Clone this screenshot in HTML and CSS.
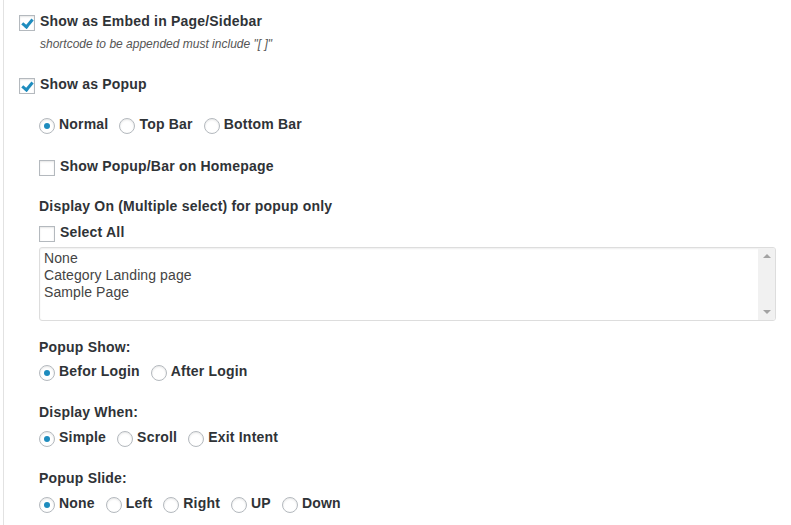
FILE: index.html
```html
<!DOCTYPE html>
<html lang="en">
<head>
  <meta charset="UTF-8">
  <meta name="viewport" content="width=device-width, initial-scale=1.0">
  <title>Popup settings</title>
  <link rel="stylesheet" href="styles.css">
</head>
<body>
  <div class="panel">
    <label class="row row-embed">
      <input class="cb" type="checkbox" checked>
      <span>Show as Embed in Page/Sidebar</span>
    </label>
    <p class="hint">shortcode to be appended must include "[ ]"</p>

    <label class="row row-popup">
      <input class="cb" type="checkbox" checked>
      <span>Show as Popup</span>
    </label>

    <div class="sub">
      <div class="row radios radios-type">
        <label class="opt"><input class="rd" type="radio" name="type" checked>Normal</label>
        <label class="opt"><input class="rd" type="radio" name="type">Top Bar</label>
        <label class="opt"><input class="rd" type="radio" name="type">Bottom Bar</label>
      </div>

      <label class="row row-home">
        <input class="cb" type="checkbox">
        <span>Show Popup/Bar on Homepage</span>
      </label>

      <div class="row heading heading-first">Display On (Multiple select) for popup only</div>
      <label class="row row-all">
        <input class="cb" type="checkbox">
        <span>Select All</span>
      </label>

      <div class="listbox">
        <ul class="items">
          <li>None</li>
          <li>Category Landing page</li>
          <li>Sample Page</li>
        </ul>
        <div class="scrollbar">
          <span class="arrow up"></span>
          <span class="arrow down"></span>
        </div>
      </div>

      <div class="row heading heading-show">Popup Show:</div>
      <div class="row radios">
        <label class="opt"><input class="rd" type="radio" name="show" checked>Befor Login</label>
        <label class="opt"><input class="rd" type="radio" name="show">After Login</label>
      </div>

      <div class="row heading">Display When:</div>
      <div class="row radios">
        <label class="opt"><input class="rd" type="radio" name="when" checked>Simple</label>
        <label class="opt"><input class="rd" type="radio" name="when">Scroll</label>
        <label class="opt"><input class="rd" type="radio" name="when">Exit Intent</label>
      </div>

      <div class="row heading">Popup Slide:</div>
      <div class="row radios">
        <label class="opt"><input class="rd" type="radio" name="slide" checked>None</label>
        <label class="opt"><input class="rd" type="radio" name="slide">Left</label>
        <label class="opt"><input class="rd" type="radio" name="slide">Right</label>
        <label class="opt"><input class="rd" type="radio" name="slide">UP</label>
        <label class="opt"><input class="rd" type="radio" name="slide">Down</label>
      </div>
    </div>
  </div>
</body>
</html>
```

FILE: styles.css
```css
html, body {
  margin: 0;
  padding: 0;
  background: #fff;
}

body {
  font-family: "Liberation Sans", Arial, sans-serif;
  color: #2f3337;
  height: 525px;
  overflow: hidden;
}

.panel {
  margin-left: 3px;
  border-left: 1px solid #e2e2e2;
  padding: 11px 0 0 15px;
  min-height: 525px;
  box-sizing: border-box;
}

.row {
  display: flex;
  align-items: center;
  height: 20px;
  font-size: 14px;
  font-weight: bold;
  letter-spacing: .2px;
}

.hint {
  margin: 3px 0 0 21px;
  height: 20px;
  line-height: 20px;
  font-size: 12px;
  font-style: italic;
  color: #555;
}

.row-popup { margin-top: 20px; }

.sub {
  padding-left: 20px;
}

.radios-type { margin-top: 20px; }
.row-home { margin-top: 22px; }
.heading-first { margin-top: 20px; }
.row-all { margin-top: 6px; }
.heading-show { margin-top: 16px; }

.heading + .radios { margin-top: 4px; }
.radios + .heading { margin-top: 21px; }
.radios + .heading + .radios { margin-top: 5px; }

/* checkbox + radio look like the wp admin ones */
.cb, .rd {
  -webkit-appearance: none;
  appearance: none;
  margin: 0 5px 0 0;
  width: 16px;
  height: 16px;
  border: 1px solid #b4b9be;
  background: #fff;
  box-shadow: inset 0 1px 2px rgba(0,0,0,.1);
  box-sizing: border-box;
  position: relative;
  flex: none;
}

.cb { top: 2px; }

.cb:checked::before {
  content: "";
  position: absolute;
  left: 4px;
  top: 1px;
  width: 4px;
  height: 8px;
  border-right: 3px solid #1e8cbe;
  border-bottom: 3px solid #1e8cbe;
  transform: rotate(40deg);
}

.rd {
  border-radius: 50%;
  margin-right: 4px;
  top: 2px;
}

.rd:checked::before {
  content: "";
  position: absolute;
  left: 4px;
  top: 4px;
  width: 6px;
  height: 6px;
  border-radius: 50%;
  background: #1e8cbe;
}

.opt {
  display: flex;
  align-items: center;
  margin-right: 11px;
}

.listbox {
  display: flex;
  margin-top: 5px;
  width: 737px;
  height: 74px;
  border: 1px solid #ddd;
  border-radius: 3px;
  box-shadow: inset 0 1px 2px rgba(0,0,0,.07);
  box-sizing: border-box;
  overflow: hidden;
}

.items {
  flex: 1;
  margin: 0;
  padding: 2px 4px;
  list-style: none;
  font-size: 14px;
  line-height: 17px;
  letter-spacing: .1px;
  color: #444;
}

.scrollbar {
  width: 17px;
  background: #f1f1f1;
  display: flex;
  flex-direction: column;
  justify-content: space-between;
  align-items: center;
  padding: 6px 0;
}

.arrow {
  width: 0;
  height: 0;
  border-left: 4px solid transparent;
  border-right: 4px solid transparent;
}
.arrow.up { border-bottom: 4px solid #a3a3a3; }
.arrow.down { border-top: 4px solid #a3a3a3; }
```
